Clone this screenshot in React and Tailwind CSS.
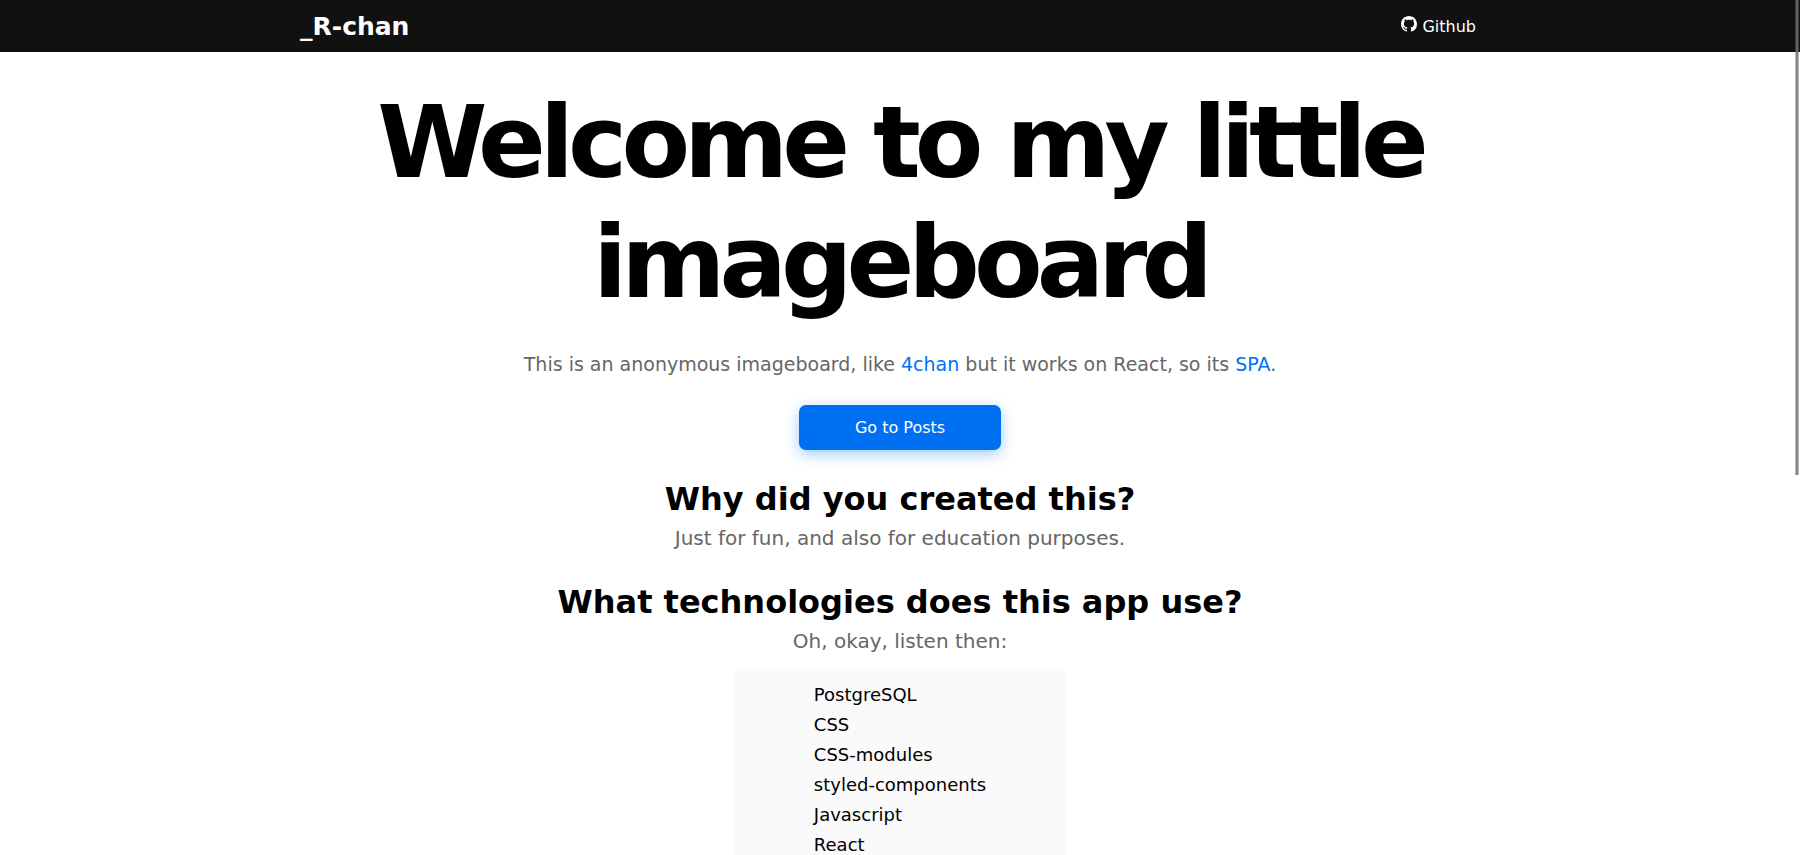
const technologies = ['PostgreSQL', 'CSS', 'CSS-modules', 'styled-components', 'Javascript', 'React'];

function GithubIcon() {
  return (
    <svg viewBox="0 0 16 16" className="mb-1.5 size-4 fill-current" aria-hidden="true">
      <path
        fillRule="evenodd"
        d="M8 0C3.58 0 0 3.58 0 8c0 3.54 2.29 6.53 5.47 7.59.4.07.55-.17.55-.38 0-.19-.01-.82-.01-1.49-2.01.37-2.53-.49-2.69-.94-.09-.23-.48-.94-.82-1.13-.28-.15-.68-.52-.01-.53.63-.01 1.08.58 1.23.82.72 1.21 1.87.87 2.33.66.07-.52.28-.87.51-1.07-1.78-.2-3.64-.89-3.64-3.95 0-.87.31-1.59.82-2.15-.08-.2-.36-1.02.08-2.12 0 0 .67-.21 2.2.82.64-.18 1.32-.27 2-.27s1.36.09 2 .27c1.53-1.04 2.2-.82 2.2-.82.44 1.1.16 1.92.08 2.12.51.56.82 1.27.82 2.15 0 3.07-1.87 3.75-3.65 3.95.29.25.54.73.54 1.48 0 1.07-.01 1.93-.01 2.2 0 .21.15.46.55.38A8.01 8.01 0 0 0 16 8c0-4.42-3.58-8-8-8z"
      />
    </svg>
  );
}

function Header() {
  return (
    <header className="bg-[#111] text-white">
      <nav className="mx-auto flex h-13 max-w-[1200px] items-center justify-between pt-0.5">
        <a href="#home" className="text-[25px] leading-8 font-bold">_R-chan</a>
        <a href="#github" className="mr-6 flex items-center gap-[5px] text-base">
          <GithubIcon />
          Github
        </a>
      </nav>
    </header>
  );
}

function Section({ title, text, children }) {
  return (
    <section className="mt-[25px] flex flex-col items-center">
      <h2 className="text-[32px] leading-12 font-bold">{title}</h2>
      <p className="text-xl leading-[30px] text-[#666]">{text}</p>
      {children}
    </section>
  );
}

export default function App() {
  return (
    <div className="relative bg-white font-['DejaVu_Sans',sans-serif] text-black">
      <Header />
      <main className="mx-auto flex max-w-[1200px] flex-col items-center text-center">
        <h1 className="mt-[31px] text-[100px] leading-[120px] font-bold tracking-[-0.06em]">
          Welcome to my little imageboard
        </h1>
        <p className="mt-6 text-[19px] leading-[34px] text-[#666]">
          This is an anonymous imageboard, like <a href="#4chan" className="text-[#0070f3]">4chan</a> but it
          works on React, so its <a href="#spa" className="text-[#0070f3]">SPA</a>.
        </p>
        <button
          type="button"
          className="mt-6 h-[45px] w-[202px] rounded-[7px] bg-[#0070f3] text-base text-white shadow-[0_4px_14px_0_rgba(0,118,255,0.39)]"
        >
          Go to Posts
        </button>
        <Section title="Why did you created this?" text="Just for fun, and also for education purposes." />
        <Section title="What technologies does this app use?" text="Oh, okay, listen then:">
          <ul className="mt-3 rounded-[7px] bg-[#fafafa] px-20 py-3 text-left text-lg leading-[30px]">
            {technologies.map((name) => (
              <li key={name}>{name}</li>
            ))}
          </ul>
        </Section>
      </main>
      <div
        className="fixed top-0 right-px h-[475px] w-1 border-x border-[#6b6b6b]/48 bg-[#737373]/85 bg-clip-padding"
        aria-hidden="true"
      />
    </div>
  );
}
